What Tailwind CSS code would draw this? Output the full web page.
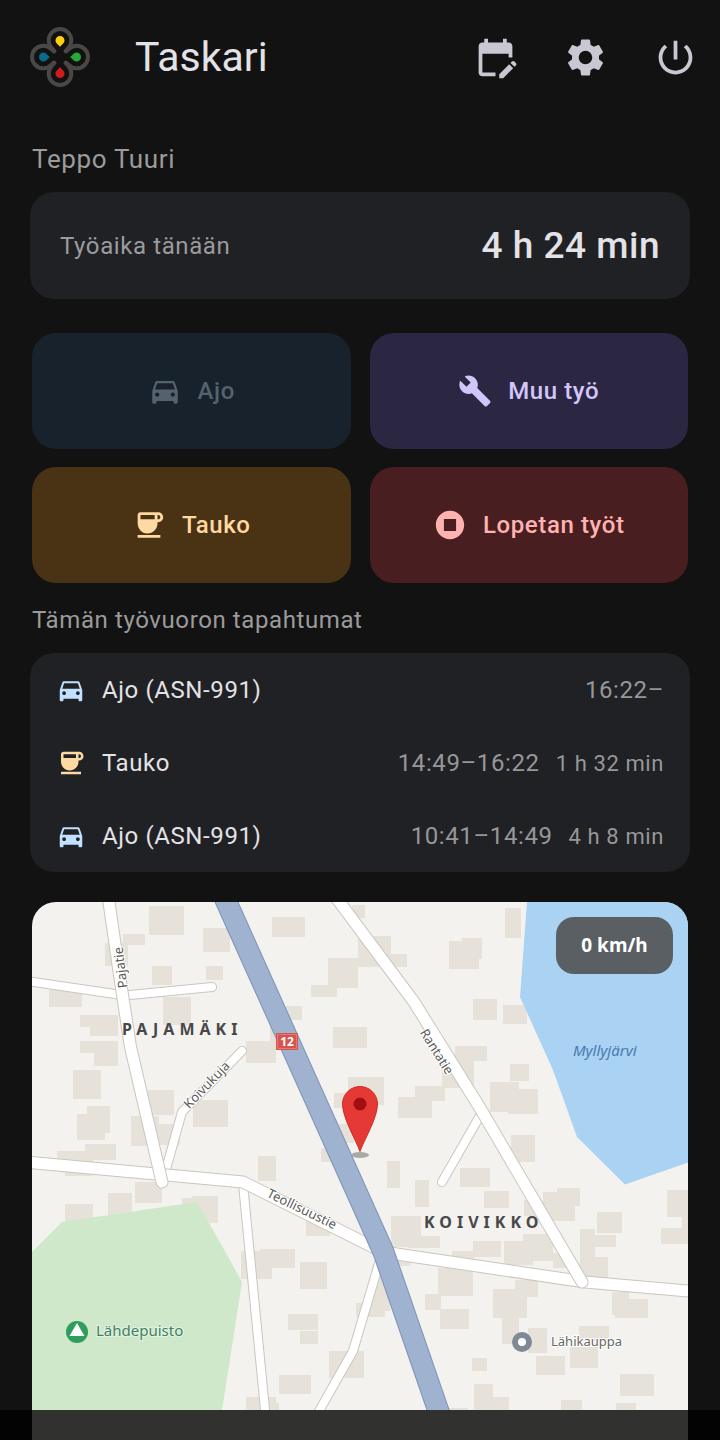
<!DOCTYPE html>
<html lang="fi">
<head>
    <meta charset="UTF-8">
    <meta name="viewport" content="width=device-width, initial-scale=1.0">
    <title>Taskari</title>
    <!-- Tailwind CSS CDN -->
    <script src="https://cdn.jsdelivr.net/npm/@tailwindcss/browser@4"></script>
</head>
<body class="bg-[#121212] text-[#e3e2e6] font-['Roboto',sans-serif]">
    <!-- Icons -->
    <svg class="hidden" aria-hidden="true">
        <symbol id="icon-car" viewBox="0 0 24 24"><path fill-rule="evenodd" d="M18.92 6.01C18.72 5.42 18.16 5 17.5 5h-11c-.66 0-1.21.42-1.42 1.01L3 12v8c0 .55.45 1 1 1h1c.55 0 1-.45 1-1v-1h12v1c0 .55.45 1 1 1h1c.55 0 1-.45 1-1v-8l-2.08-5.99zM6.5 16c-.83 0-1.5-.67-1.5-1.5S5.67 13 6.5 13s1.5.67 1.5 1.5S7.33 16 6.5 16zm11 0c-.83 0-1.5-.67-1.5-1.5s.67-1.5 1.5-1.5 1.5.67 1.5 1.5-.67 1.5-1.5 1.5zM5 11l1.5-4.5h11L19 11H5z"/></symbol>
        <symbol id="icon-cup" viewBox="0 0 24 24"><path fill-rule="evenodd" d="M18.5 3H6C4.9 3 4 3.9 4 5v5.71c0 3.83 2.95 7.18 6.78 7.29 3.96.12 7.22-3.06 7.22-7v-1h.5c1.93 0 3.5-1.57 3.5-3.5S20.43 3 18.5 3zM16 5v3H6V5h10zm2.5 3H18V5h.5c.83 0 1.5.67 1.5 1.5S19.33 8 18.5 8zM4 19h16v2H4v-2z"/></symbol>
        <symbol id="icon-wrench" viewBox="0 0 24 24"><path d="M22.7 19l-9.1-9.1c.9-2.3.4-5-1.5-6.9-2-2-5-2.4-7.4-1.3L9 6 6 9 1.6 4.7C.4 7.1.9 10.1 2.9 12.1c1.9 1.9 4.6 2.4 6.9 1.5l9.1 9.1c.4.4 1 .4 1.4 0l2.3-2.3c.5-.4.5-1.1.1-1.4z"/></symbol>
        <symbol id="icon-stop" viewBox="0 0 24 24"><path fill-rule="evenodd" d="M12 2C6.48 2 2 6.48 2 12s4.48 10 10 10 10-4.48 10-10S17.52 2 12 2zm4.3 14.3H7.7V7.7h8.6v8.6z"/></symbol>
    </svg>

    <div class="flex flex-col h-screen overflow-hidden">
        <!-- Header -->
        <header class="flex items-center h-[114px] pl-[30px] shrink-0">
            <svg class="size-[60px]" viewBox="0 0 60 60" role="img" aria-label="Taskari">
                <g fill="none" stroke="#4a4846" stroke-width="4" stroke-linecap="round" stroke-linejoin="round">
                    <path d="M24.5 24 22 21.3A11.3 11.3 0 1 1 38 21.3L35.5 24"/>
                    <path d="M36 24.5 38.7 22A11.3 11.3 0 1 1 38.7 38L36 35.5"/>
                    <path d="M35.5 36 38 38.7A11.3 11.3 0 1 1 22 38.7L24.5 36"/>
                    <path d="M24 35.5 21.3 38A11.3 11.3 0 1 1 21.3 22L24 24.5"/>
                </g>
                <path fill="#ffcf10" d="M30 20C29 18 25.5 16.5 25.5 13.5a4.5 4.5 0 1 1 9 0C34.5 16.5 31 18 30 20z"/>
                <path fill="#28a638" d="M40 30C42 29 43.5 25.5 46.5 25.5a4.5 4.5 0 1 1 0 9C43.5 34.5 42 31 40 30z"/>
                <path fill="#d01c1c" d="M30 40C31 42 34.5 43.5 34.5 46.5a4.5 4.5 0 1 1-9 0C25.5 43.5 29 42 30 40z"/>
                <path fill="#0b6a8c" d="M20 30C18 31 16.5 34.5 13.5 34.5a4.5 4.5 0 1 1 0-9C16.5 25.5 18 29 20 30z"/>
            </svg>
            <h1 class="ml-[45px] text-[41px] leading-[48px] grow">Taskari</h1>
            <nav class="flex text-[#c8c8d2]">
                <button type="button" aria-label="Muokkaa kalenteria" class="flex items-center justify-center size-[90px]">
                    <svg class="size-[45px]" viewBox="0 0 24 24" fill="currentColor"><path d="M12 22H5c-1.11 0-2-.9-2-2L3.01 6c0-1.1.88-2 1.99-2h1V2h2v2h8V2h2v2h1c1.1 0 2 .9 2 2v6h-2v-2H5v10h7v2zm10.13-5.01.71-.71c.39-.39.39-1.02 0-1.41l-.71-.71c-.39-.39-1.02-.39-1.41 0l-.71.71 2.12 2.12zm-.71.71-5.3 5.3H14v-2.12l5.3-5.3 2.12 2.12z"/></svg>
                </button>
                <button type="button" aria-label="Asetukset" class="flex items-center justify-center size-[90px]">
                    <svg class="size-[45px]" viewBox="0 0 24 24" fill="currentColor"><path fill-rule="evenodd" d="M19.14 12.94c.04-.3.06-.61.06-.94 0-.32-.02-.64-.07-.94l2.03-1.58c.18-.14.23-.41.12-.61l-1.92-3.32c-.12-.22-.37-.29-.59-.22l-2.39.96c-.5-.38-1.03-.7-1.62-.94l-.36-2.54c-.04-.24-.24-.41-.48-.41h-3.84c-.24 0-.43.17-.47.41l-.36 2.54c-.59.24-1.13.57-1.62.94l-2.39-.96c-.22-.08-.47 0-.59.22L2.74 8.87c-.12.21-.08.47.12.61l2.03 1.58c-.05.3-.09.63-.09.94s.02.64.07.94l-2.03 1.58c-.18.14-.23.41-.12.61l1.92 3.32c.12.22.37.29.59.22l2.39-.96c.5.38 1.03.7 1.62.94l.36 2.54c.05.24.24.41.48.41h3.84c.24 0 .44-.17.47-.41l.36-2.54c.59-.24 1.13-.56 1.62-.94l2.39.96c.22.08.47 0 .59-.22l1.92-3.32c.12-.22.07-.47-.12-.61l-2.01-1.58zM12 15.6c-1.98 0-3.6-1.62-3.6-3.6s1.62-3.6 3.6-3.6 3.6 1.62 3.6 3.6-1.62 3.6-3.6 3.6z"/></svg>
                </button>
                <button type="button" aria-label="Kirjaudu ulos" class="flex items-center justify-center size-[90px]">
                    <svg class="size-[45px]" viewBox="0 0 24 24" fill="currentColor"><path d="M13 3h-2v10h2V3zm4.83 2.17-1.42 1.42C17.99 7.86 19 9.81 19 12c0 3.87-3.13 7-7 7s-7-3.13-7-7c0-2.19 1.01-4.14 2.58-5.42L6.17 5.17C4.23 6.82 3 9.26 3 12c0 4.97 4.03 9 9 9s9-4.03 9-9c0-2.74-1.23-5.18-3.17-6.83z"/></svg>
                </button>
            </nav>
        </header>

        <main class="flex flex-col grow min-h-0 pt-[29px] px-[30px]">
            <!-- Driver and working time -->
            <h2 class="px-0.5 text-[26px] leading-8 tracking-wide text-[#9b9b9b]">Teppo Tuuri</h2>
            <section class="flex items-center justify-between mt-[17px] h-[107px] px-[30px] rounded-3xl bg-[#202124] shrink-0">
                <span class="text-2xl tracking-wide text-[#9b9b9d]">Työaika tänään</span>
                <span class="text-[37px] font-medium tracking-[0.5px]">4 h 24 min</span>
            </section>

            <!-- Actions -->
            <div class="grid grid-cols-2 gap-x-[19px] gap-y-[18px] mt-[34px] px-0.5 shrink-0 text-2xl font-medium tracking-wide">
                <button type="button" disabled class="flex items-center justify-center gap-4 h-[116px] rounded-3xl bg-[#18222c] text-[#54626e]">
                    <svg class="size-[34px] fill-current"><use href="#icon-car"/></svg>Ajo
                </button>
                <button type="button" class="flex items-center justify-center gap-4 h-[116px] rounded-3xl bg-[#2b2642] text-[#d2c5fc]">
                    <svg class="size-[34px] fill-current"><use href="#icon-wrench"/></svg>Muu työ
                </button>
                <button type="button" class="flex items-center justify-center gap-4 h-[116px] rounded-3xl bg-[#4a3314] text-[#ffd9a2]">
                    <svg class="size-[34px] fill-current"><use href="#icon-cup"/></svg>Tauko
                </button>
                <button type="button" class="flex items-center justify-center gap-4 h-[116px] rounded-3xl bg-[#481e20] text-[#ffb3b0]">
                    <svg class="size-[34px] fill-current"><use href="#icon-stop"/></svg>Lopetan työt
                </button>
            </div>

            <!-- Shift events -->
            <h2 class="mt-[21px] px-0.5 text-2xl tracking-wide text-[#9b9b9b]">Tämän työvuoron tapahtumat</h2>
            <ul class="mt-[17px] px-[26px] rounded-3xl bg-[#202124] shrink-0 text-2xl tracking-wide">
                <li class="flex items-center gap-4 h-[73px]">
                    <svg class="size-[30px] fill-[#c2e0ff]"><use href="#icon-car"/></svg>
                    <span class="grow">Ajo (ASN-991)</span>
                    <span class="text-[#97979a]">16:22–</span>
                </li>
                <li class="flex items-center gap-4 h-[73px]">
                    <svg class="size-[30px] fill-[#ffd9a2]"><use href="#icon-cup"/></svg>
                    <span class="grow">Tauko</span>
                    <span class="flex items-baseline gap-4 text-[#97979a]">14:49–16:22 <span class="text-[22px]">1 h 32 min</span></span>
                </li>
                <li class="flex items-center gap-4 h-[73px]">
                    <svg class="size-[30px] fill-[#c2e0ff]"><use href="#icon-car"/></svg>
                    <span class="grow">Ajo (ASN-991)</span>
                    <span class="flex items-baseline gap-4 text-[#97979a]">10:41–14:49 <span class="text-[22px]">4 h 8 min</span></span>
                </li>
            </ul>

            <!-- Map -->
            <section class="relative grow min-h-0 mt-[30px] mx-0.5 pb-[30px] rounded-t-3xl overflow-hidden bg-[#f3f2ee]">
                <svg class="w-full h-full font-['Noto_Sans',sans-serif]" viewBox="32 902 656 508" preserveAspectRatio="xMidYMin slice">
                    <!-- Buildings -->
                    <path fill="#e6e2d9" d="M149 906h35v29h-35zM123 934h22v11h-22zM105 943h23v23h-23zM203 928h27v24h-27zM152 966h20v19h-20zM206 966h17v14h-17zM49 990h33v17h-33zM163 997h28v28h-28zM80 1015h38v12h-38zM90 1015h28v21h-28zM80 1041h20v12h-20zM94 1041h24v25h-24zM73 1070h28v29h-28zM148 1090h26v25h-26zM87 1106h23v27h-23zM77 1114h28v26h-28zM131 1116h28v30h-28zM158 1124h22v21h-22zM193 1100h35v27h-35zM85 1144h31v16h-31zM57 1151h35v9h-35zM65 1160h28v16h-28z"/>
                    <path fill="#e6e2d9" d="M272 917h33v20h-33zM352 905h13v13h-13zM358 936h33v31h-33zM391 954h16v13h-16zM328 958h30v30h-30zM311 985h26v12h-26zM286 1006h16v14h-16zM333 1027h34v21h-34zM270 1027h13v15h-13zM246 1041h30v22h-30zM449 941h30v28h-30zM462 938h20v21h-20zM473 999h24v21h-24zM348 1077h36v28h-36zM334 1093h16v15h-16zM455 1046h32v15h-32zM442 1060h32v28h-32zM415 1086h30v15h-30zM398 1097h34v21h-34zM339 1124h15v19h-15zM321 1148h14v14h-14zM258 1156h18v25h-18zM387 1161h13v27h-13z"/>
                    <path fill="#e6e2d9" d="M505 908h16v30h-16zM503 1005h24v19h-24zM510 1064h19v17h-19zM490 1082h29v30h-29zM508 1089h30v25h-30zM511 1135h24v27h-24zM65 1204h28v20h-28zM108 1193h24v25h-24zM135 1182h27v21h-27zM182 1198h10v8h-10zM192 1196h26v27h-26zM241 1251h31v28h-31zM306 1221h24v15h-24zM260 1249h35v19h-35zM300 1262h27v27h-27zM288 1314h30v16h-30zM300 1331h18v13h-18zM279 1375h32v19h-32zM246 1397h30v13h-30zM266 1403h13v7h-13zM329 1351h35v27h-35zM356 1303h29v14h-29zM372 1265h18v46h-18z"/>
                    <path fill="#e6e2d9" d="M415 1180h14v27h-14zM391 1216h30v31h-30zM408 1236h32v12h-32zM460 1168h30v19h-30zM438 1268h35v28h-35zM425 1294h16v16h-16zM440 1309h29v20h-29zM452 1251h22v8h-22zM473 1241h28v16h-28zM397 1260h13v6h-13zM472 1358h15v13h-15zM474 1384h19v26h-19zM484 1191h25v17h-25zM557 1188h23v18h-23zM543 1192h32v29h-32zM524 1200h14v16h-14zM504 1241h29v24h-29zM523 1234h30v27h-30zM553 1253h20v15h-20zM580 1229h15v30h-15zM595 1235h21v12h-21zM580 1257h28v22h-28zM597 1212h25v21h-25zM667 1190h21v27h-21zM682 1210h6v20h-6zM661 1228h27v16h-27zM493 1289h34v29h-34zM515 1280h23v17h-23zM502 1318h17v26h-17zM528 1328h19v25h-19zM612 1292h17v23h-17zM615 1299h33v19h-33zM579 1326h30v15h-30zM570 1347h28v21h-28zM536 1356h29v19h-29zM620 1374h34v22h-34zM480 1397h29v13h-29zM561 1400h21v10h-21zM616 1403h20v7h-20zM448 1408h20v2h-20z"/>

                    <!-- Lake and park -->
                    <path fill="#a9d2f3" d="M527 902 520 997 553 1070 577 1137 625 1184.5 688 1162.5V902z"/>
                    <path fill="#cfe8ca" d="M32 1252 62 1222 197 1202 222 1246 242 1282 222 1410H32z"/>

                    <g fill="none" stroke-linecap="round" stroke-linejoin="round">
                        <!-- Side roads -->
                        <path stroke="#cbc6bd" stroke-width="10" d="M20 980 125 995.5 212 987M242 1051 182 1112 163 1180M243 1184 266 1420M383 1250 353 1351 314 1420M481 1114 442 1182"/>
                        <path stroke="#ffffff" stroke-width="8" d="M20 980 125 995.5 212 987M242 1051 182 1112 163 1180M243 1184 266 1420M383 1250 353 1351 314 1420M481 1114 442 1182"/>
                        <!-- Main streets -->
                        <path stroke="#cbc6bd" stroke-width="13" d="M20 1161.5 243 1182 383 1252 585 1282 700 1292"/>
                        <path stroke="#ffffff" stroke-width="11" d="M20 1161.5 243 1182 383 1252 585 1282 700 1292"/>
                        <path stroke="#cbc6bd" stroke-width="13" d="M107.5 892 121 985 130.5 1047 162 1182"/>
                        <path stroke="#ffffff" stroke-width="11" d="M107.5 892 121 985 130.5 1047 162 1182"/>
                        <path stroke="#cbc6bd" stroke-width="13" d="M332 892 414 1002 480 1108 582 1282"/>
                        <path stroke="#ffffff" stroke-width="11" d="M332 892 414 1002 480 1108 582 1282"/>
                        <!-- Highway -->
                        <path stroke="#7c93b8" stroke-width="22" d="M222 892 383.5 1252 441.5 1420"/>
                        <path stroke="#9fb2cf" stroke-width="20" d="M222 892 383.5 1252 441.5 1420"/>
                    </g>

                    <!-- Road number -->
                    <rect x="276" y="1033" width="22" height="17" fill="#d9534f"/>
                    <rect x="277.5" y="1034.5" width="19" height="14" fill="none" stroke="#e27976"/>
                    <text x="287" y="1046" text-anchor="middle" class="text-[12px] font-bold fill-white">12</text>

                    <!-- Road names -->
                    <g text-anchor="middle" class="text-[13px] fill-[#5a5a5a] stroke-white stroke-2 [paint-order:stroke]">
                        <text transform="translate(125 967) rotate(-97)">Pajatie</text>
                        <text transform="translate(210 1088) rotate(-46)">Koivukuja</text>
                        <text transform="translate(433 1054) rotate(58)">Rantatie</text>
                        <text transform="translate(300 1213) rotate(26)">Teollisuustie</text>
                    </g>

                    <!-- Districts -->
                    <g class="text-[16px] font-bold tracking-[5px] fill-[#484848]">
                        <text x="122" y="1035">PAJAMÄKI</text>
                        <text x="424" y="1228">KOIVIKKO</text>
                    </g>

                    <!-- Places -->
                    <text x="573" y="1056" class="text-[15px] italic fill-[#4a79b0]">Myllyjärvi</text>
                    <circle cx="77" cy="1332" r="11" fill="#2f9e5c"/>
                    <path fill="#ffffff" d="M77 1323 84.5 1336h-15z"/>
                    <text x="96" y="1336" class="text-[15px] fill-[#3f7f66] stroke-[#e4f3e1] stroke-2 [paint-order:stroke]">Lähdepuisto</text>
                    <circle cx="522" cy="1342" r="10" fill="#7f8a96"/>
                    <circle cx="522" cy="1342" r="4" fill="#ffffff"/>
                    <text x="551" y="1346" class="text-[13px] fill-[#666666] stroke-white stroke-2 [paint-order:stroke]">Lähikauppa</text>

                    <!-- Current position -->
                    <ellipse cx="360" cy="1155" rx="9" ry="3" fill="#aaa8a4"/>
                    <path fill="#e53935" stroke="#cf2b27" d="M360 1151.5C356 1140 342.5 1118 342.5 1104a17.5 17.5 0 0 1 35 0C377.5 1118 364 1140 360 1151.5z"/>
                    <circle cx="360" cy="1104" r="6.5" fill="#a50e0e"/>
                </svg>
                <div class="absolute top-[15px] right-[15px] flex items-center justify-center w-[117px] h-[57px] rounded-[18px] bg-[#5a5f63] text-white text-[19px] font-bold font-['Noto_Sans',sans-serif]">0 km/h</div>
            </section>
        </main>
    </div>

    <!-- System navigation bar -->
    <div class="fixed inset-x-0 bottom-0 h-[30px] bg-black/80"></div>
</body>
</html>
